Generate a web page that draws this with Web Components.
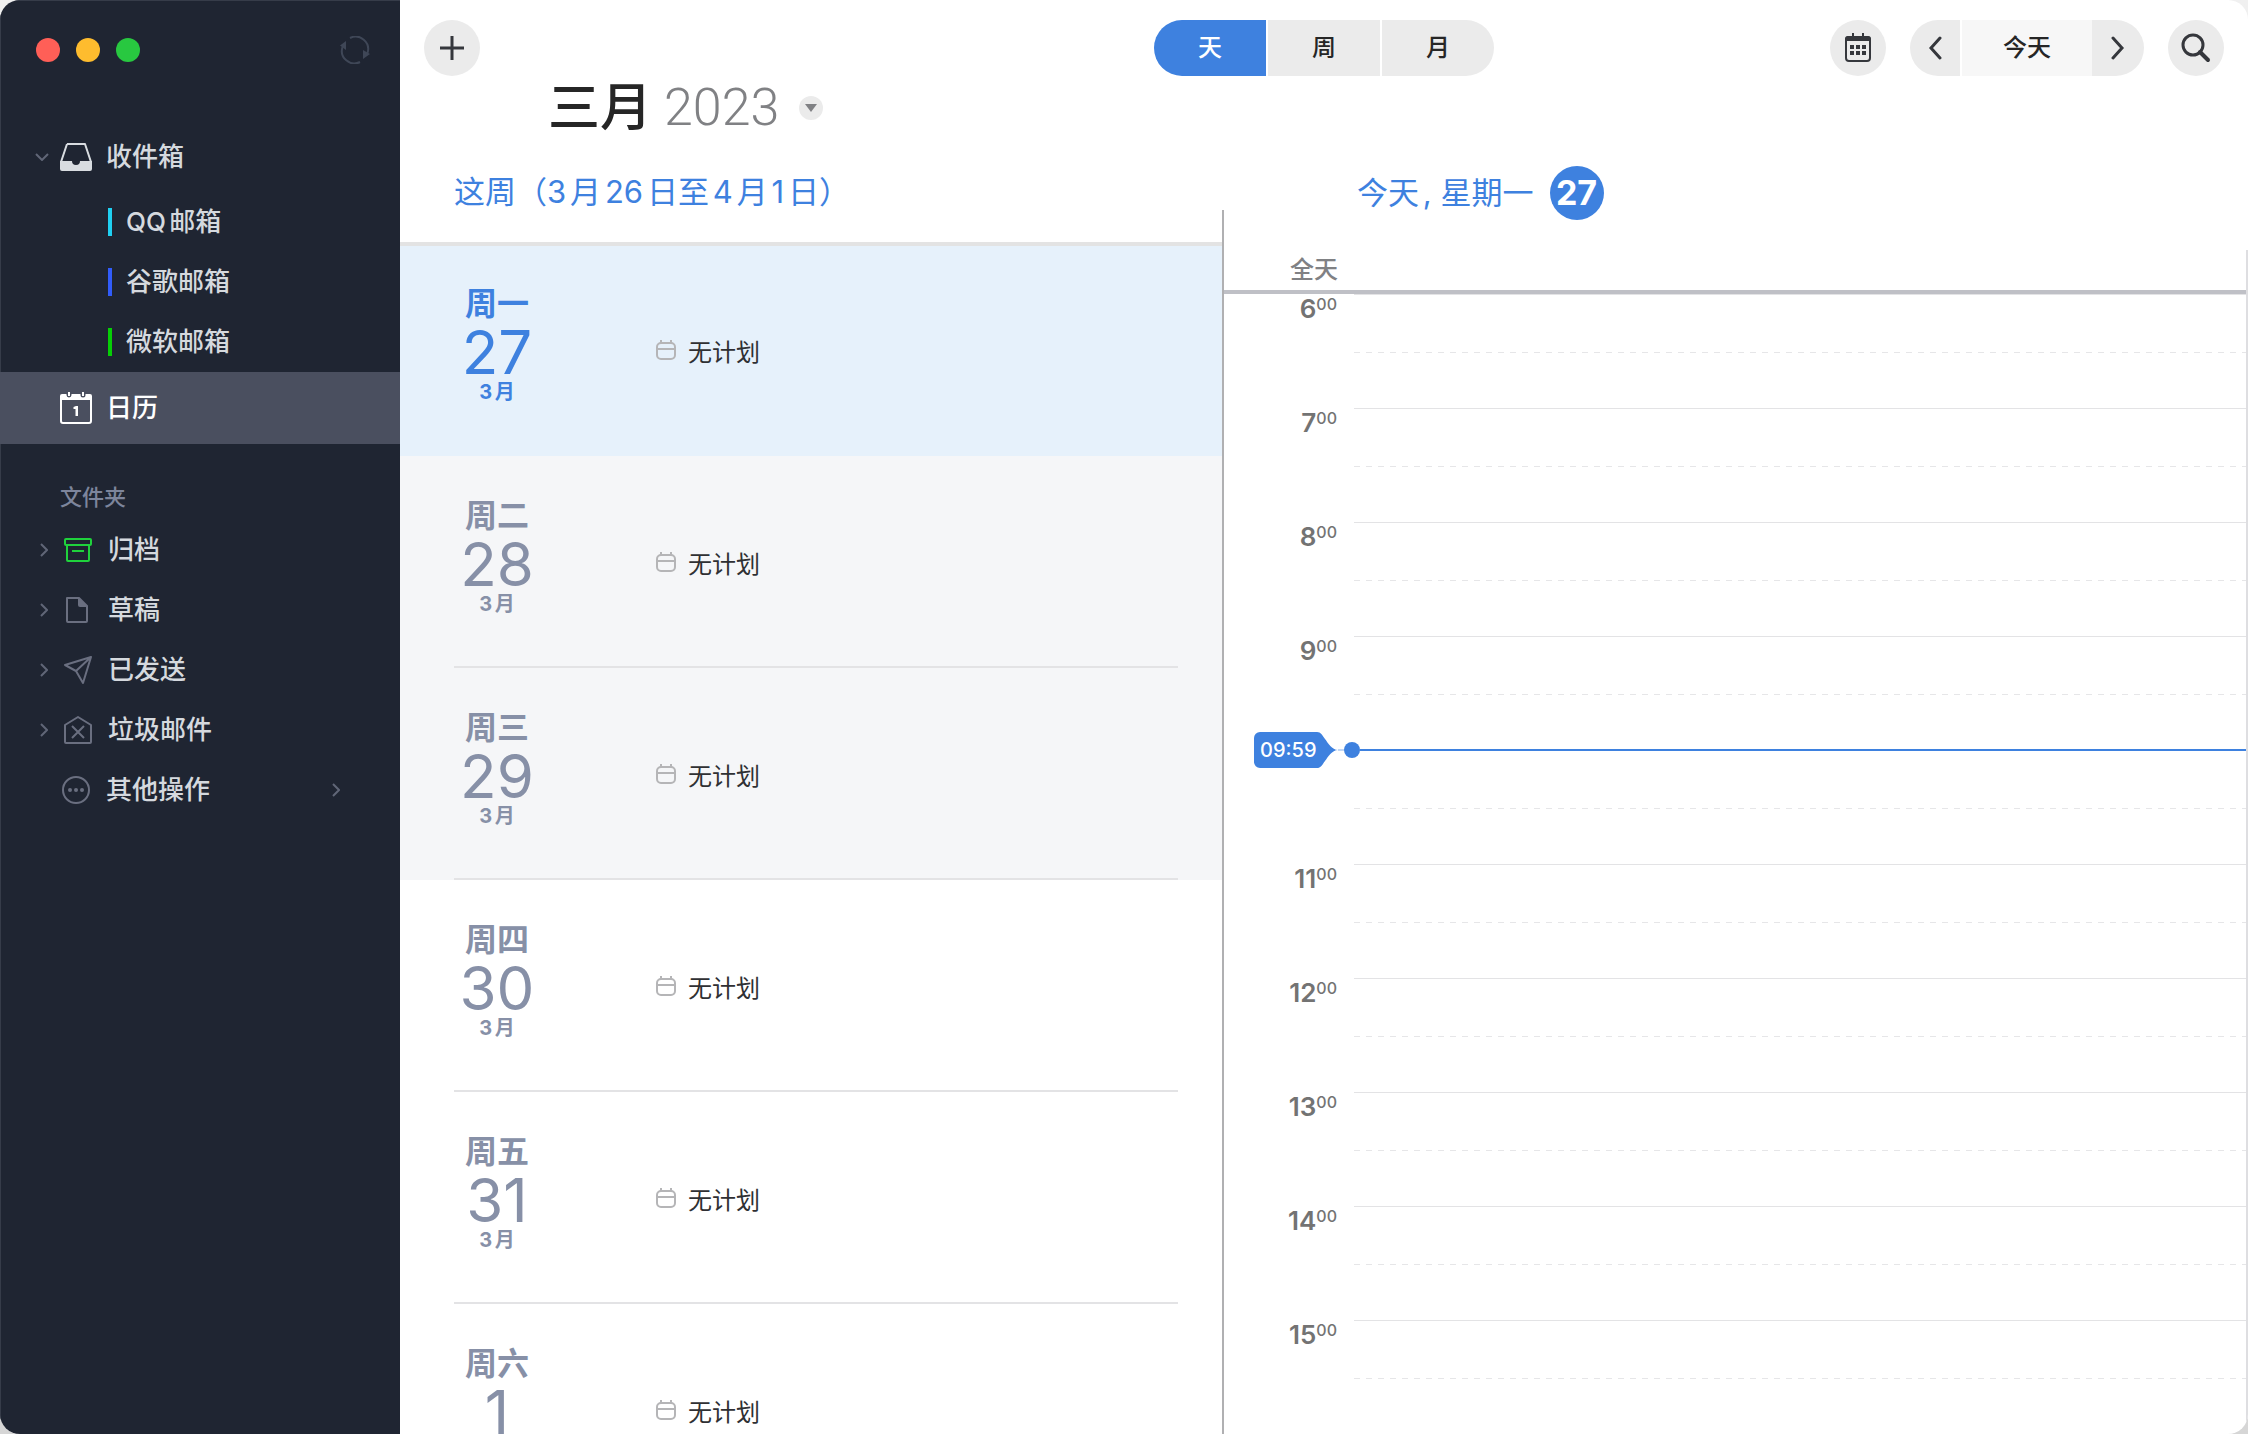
<!DOCTYPE html>
<html lang="zh-CN">
<head>
<meta charset="utf-8">
<title>日历</title>
<style>
  html, body { margin: 0; height: 100%; }
  body {
    background: linear-gradient(#f0f0f0, #d6d6d6);
    font-family: Inter, "Noto Sans CJK SC", sans-serif;
    text-autospace: normal;
    overflow: hidden;
    --blue: #3e81df;
    --chip: #ebebeb;
    --ink: #35373c;
  }
</style>
</head>
<body>
<calendar-app></calendar-app>
<script>
const ICONS = {
  refresh: ['0 0 30 28', '<g fill="none" stroke="#3f4757" stroke-width="2"><path d="M10 2A12.500 12.500 0 0 1 27.500 17M20 26A12.500 12.500 0 0 1 2.500 11"/></g><path fill="#3f4757" d="M0 9.500 6 5v9zM30 18l-7-4v9z"/>'],
  down: ['0 0 14 8', '<path d="M1 1l6 6 6-6" fill="none" stroke="#606677" stroke-width="2"/>'],
  right: ['0 0 8 14', '<path d="M1 1l6 6-6 6" fill="none" stroke="#606677" stroke-width="2"/>'],
  inbox: ['0 0 32 28', '<path d="M7 1h18l6 18M1 19 7 1" fill="none" stroke="#d8dce0" stroke-width="2" stroke-linejoin="round"/><path fill="#d8dce0" d="M0 18h12a4 4 0 0 0 8 0h12v8a2 2 0 0 1-2 2H2a2 2 0 0 1-2-2z"/>'],
  cal1: ['0 0 32 32', '<path d="M1 6v23a2 2 0 0 0 2 2h26a2 2 0 0 0 2-2V6" fill="none" stroke="#fff" stroke-width="2"/><path fill="#fff" d="M0 8V4a2 2 0 0 1 2-2h4.500v1a2.500 2.500 0 0 0 5 0V2h9v1a2.500 2.500 0 0 0 5 0V2H30a2 2 0 0 1 2 2v4zM8 0h2v4H8zM22 0h2v4h-2zM18 14v10h-2.500v-7h-2v-2l2.500-1z"/>'],
  archive: ['0 0 28 24', '<g fill="none" stroke="#1fd23c" stroke-width="2" stroke-linejoin="round"><rect x="1" y="1" width="26" height="6" rx="1"/><path d="M3 7v15a1 1 0 0 0 1 1h20a1 1 0 0 0 1-1V7M8 13h12"/></g>'],
  draft: ['0 0 28 26', '<path d="M3 1h12l8 8v15a1 1 0 0 1-1 1H4a1 1 0 0 1-1-1z" fill="none" stroke="#6a6f80" stroke-width="2" stroke-linejoin="round"/><path fill="#6a6f80" d="M14 0l10 10H16a2 2 0 0 1-2-2z"/>'],
  sent: ['0 0 28 28', '<path d="M27 1 1 9l11 6 7 12zM27 1 12 15" fill="none" stroke="#6a6f80" stroke-width="2" stroke-linejoin="round"/>'],
  spam: ['0 0 28 28', '<path d="M1 9 14 1l13 8v17a1 1 0 0 1-1 1H2a1 1 0 0 1-1-1zM8 10l12 12M20 10 8 22" fill="none" stroke="#6a6f80" stroke-width="2" stroke-linejoin="round"/>'],
  more: ['0 0 28 28', '<circle cx="14" cy="14" r="13" fill="none" stroke="#6a6f80" stroke-width="2"/><g fill="#6a6f80"><circle cx="8" cy="14" r="2"/><circle cx="14" cy="14" r="2"/><circle cx="20" cy="14" r="2"/></g>'],
  plus: ['0 0 24 24', '<path d="M12 0v24M0 12h24" stroke="#35373c" stroke-width="3"/>'],
  month: ['0 0 26 30', '<rect x="1" y="4" width="24" height="24" rx="3" fill="none" stroke="#35373c" stroke-width="2"/><path fill="#35373c" d="M0 8V6a3 3 0 0 1 3-3h20a3 3 0 0 1 3 3v2zM7 0h2v4H7zM17 0h2v4h-2zM5 12h4v4H5zM11 12h4v4h-4zM17 12h4v4h-4zM5 18h4v4H5zM11 18h4v4h-4zM17 18h4v4h-4z"/>'],
  prev: ['0 0 14 24', '<path d="M12 2 3 12l9 10" fill="none" stroke="#35373c" stroke-width="3" stroke-linecap="round"/>'],
  next: ['0 0 14 24', '<path d="M2 2l9 10-9 10" fill="none" stroke="#35373c" stroke-width="3" stroke-linecap="round"/>'],
  search: ['0 0 30 30', '<circle cx="12" cy="12" r="10" fill="none" stroke="#35373c" stroke-width="3"/><path d="M19 19l8 8" stroke="#35373c" stroke-width="4" stroke-linecap="round"/>'],
  caret: ['0 0 12 8', '<path d="M0 0h12L6 8z" fill="#808184"/>'],
  event: ['0 0 20 20', '<g fill="none" stroke="#b5b5b7" stroke-width="2"><rect x="1" y="3" width="18" height="16" rx="4"/><path d="M1 9h18M5 0v3M15 0v3"/></g>'],
  flag: ['0 0 84 36', '<path fill="#3e81df" d="M6 0h57c4 0 5 3 8 7s7 11 13 11c-6 0-10 7-13 11s-4 7-8 7H6a6 6 0 0 1-6-6V6a6 6 0 0 1 6-6z"/>']
};
function define(name, html, setup) {
  const tpl = document.createElement('template');
  tpl.innerHTML = html;
  customElements.define(name, class extends HTMLElement {
    constructor() {
      super();
      this.attachShadow({ mode: 'open' }).append(tpl.content.cloneNode(true));
    }
    connectedCallback() { if (setup) setup(this, this.shadowRoot); }
  });
}
const reset = 'button,a{all:unset;box-sizing:border-box;cursor:pointer}';

define('ui-icon', '<style>:host{display:block;flex:none}svg{display:block}</style><svg aria-hidden="true"></svg>', (el, root) => {
  const [box, body] = ICONS[el.getAttribute('name')];
  const [, , w, h] = box.split(' ');
  const svg = root.querySelector('svg');
  svg.setAttribute('viewBox', box);
  svg.setAttribute('width', w);
  svg.setAttribute('height', h);
  svg.innerHTML = body;
});

define('window-lights', `<style>
  :host{display:flex;gap:16px}
  button{all:unset;width:24px;height:24px;border-radius:50%;background:var(--c)}
</style>
<button aria-label="关闭" style="--c:#ff5f57"></button><button aria-label="最小化" style="--c:#febc2e"></button><button aria-label="缩放" style="--c:#28c840"></button>`);

define('nav-item', `<style>${reset}
  :host{display:block;color:#d5d9de;font-size:26px;font-weight:500;line-height:40px}
  a{display:grid;grid-template-columns:60px 46px 1fr auto;align-items:center;height:60px;width:100%;padding-right:60px}
  .twist{display:flex;padding-left:40px}
  .twist.open{padding-left:35px}
  .icon{display:flex}
  .tall{height:70px}
  :host([folder]) a{grid-template-columns:64px 44px 1fr auto}
  :host([more]) a{grid-template-columns:62px 44px 1fr auto}
  :host([selected]) a{height:72px;background:#4a4f5f;color:#fff}
</style><a href="#"><span class="twist"></span><span class="icon"></span><slot></slot><span class="end"></span></a>`, (el, root) => {
  const icon = n => `<ui-icon name="${n}"></ui-icon>`;
  root.querySelector('.icon').innerHTML = icon(el.getAttribute('icon'));
  const t = root.querySelector('.twist');
  if (el.hasAttribute('folder')) t.innerHTML = icon('right');
  if (el.hasAttribute('open')) { t.innerHTML = icon('down'); t.classList.add('open'); root.querySelector('a').classList.add('tall'); }
  if (el.hasAttribute('more')) root.querySelector('.end').innerHTML = icon('right');
});

define('account-item', `<style>${reset}
  :host{display:block;color:#d5d9de;font-size:26px;font-weight:500;line-height:40px}
  a{display:flex;align-items:center;gap:14px;height:60px;padding-left:108px}
  i{width:4px;height:28px;background:var(--tag)}
</style><a href="#"><i></i><slot></slot></a>`);

define('side-bar', `<style>${reset}
  :host{display:block;background:#1f2532;box-shadow:inset 1px 1px 0 #363c49}
  header{display:flex;align-items:center;justify-content:space-between;height:100px;padding:0 30px 0 36px;margin-bottom:22px}
  h2{margin:31px 0 1px;padding-left:60px;font-size:22px;font-weight:500;line-height:44px;color:#7d859c}
</style>
<header><window-lights></window-lights><button aria-label="刷新"><ui-icon name="refresh"></ui-icon></button></header>
<nav>
  <nav-item icon="inbox" open>收件箱</nav-item>
  <account-item style="--tag:#1fd0f2">QQ邮箱</account-item>
  <account-item style="--tag:#315cfa">谷歌邮箱</account-item>
  <account-item style="--tag:#06cf06">微软邮箱</account-item>
  <nav-item icon="cal1" selected>日历</nav-item>
  <h2>文件夹</h2>
  <nav-item icon="archive" folder>归档</nav-item>
  <nav-item icon="draft" folder>草稿</nav-item>
  <nav-item icon="sent" folder>已发送</nav-item>
  <nav-item icon="spam" folder>垃圾邮件</nav-item>
  <nav-item icon="more" more>其他操作</nav-item>
</nav>`);

define('tool-bar', `<style>${reset}
  :host{display:grid;grid-template-columns:1fr auto 1fr;padding:20px 24px 0;font-size:24px;font-weight:500;line-height:36px;color:#262626}
  button{display:flex;align-items:center;justify-content:center;height:56px;background:var(--chip)}
  .round{width:56px;border-radius:50%}
  .group{display:flex;border-radius:28px;overflow:hidden}
  .views{gap:2px}
  .views button{width:112px}
  .views button[aria-pressed=true]{background:var(--blue);color:#fff}
  .right{display:flex;justify-content:flex-end;gap:24px}
  .prev{width:50px;margin-right:2px}
  .today{width:130px;background:#f7f7f7}
  .next{width:52px}
</style>
<div><button class="round" aria-label="新建"><ui-icon name="plus"></ui-icon></button></div>
<div class="group views"><button aria-pressed="true">天</button><button>周</button><button>月</button></div>
<div class="right">
  <button class="round" aria-label="选择日期"><ui-icon name="month"></ui-icon></button>
  <div class="group"><button class="prev" aria-label="上一天"><ui-icon name="prev"></ui-icon></button><button class="today">今天</button><button class="next" aria-label="下一天"><ui-icon name="next"></ui-icon></button></div>
  <button class="round" aria-label="搜索"><ui-icon name="search"></ui-icon></button>
</div>`);

define('day-row', `<style>
  :host{display:block;background:var(--row,#fff);color:#8790a7}
  article{display:flex;height:212px;box-sizing:border-box;margin:0 44px 0 54px;border-bottom:2px solid #e3e3e5}
  :host([today]){--row:#e6f1fb;color:var(--blue)}
  :host([today]) article{border-color:transparent}
  :host([muted]){--row:#f5f6f8}
  .date{display:flex;flex-direction:column;align-items:center;width:86px;padding-top:42px}
  .wd{font-size:32px;font-weight:700;line-height:36px}
  .num{font-size:60px;font-weight:400;line-height:60px}
  .mon{font-size:20px;font-weight:700;line-height:20px}
  .plan{display:flex;gap:12px;padding:90px 0 0 116px;height:40px;color:#2f3033;font-size:24px;line-height:38px}
  ui-icon{padding-top:6px}
</style>
<article><div class="date"><span class="wd"></span><span class="num"></span><span class="mon"></span></div>
<div class="plan"><ui-icon name="event"></ui-icon><slot></slot></div></article>`, (el, root) => {
  root.querySelector('.wd').textContent = el.getAttribute('weekday');
  root.querySelector('.num').textContent = el.getAttribute('day');
  root.querySelector('.mon').textContent = el.getAttribute('month');
});

define('week-agenda', `<style>${reset}
  :host{display:flex;flex-direction:column;min-height:0;overflow:hidden}
  .month{display:flex;align-items:center;gap:20px;padding-left:148px;line-height:64px;font-size:52px;color:#808184;font-weight:300}
  h1{display:flex;gap:12px;margin:0;font:inherit}
  strong{font-weight:500;color:#262626}
  h1 span{font-family:Roboto,sans-serif}
  .month button{display:flex;align-items:center;justify-content:center;width:24px;height:24px;border-radius:50%;background:var(--chip)}
  h2{position:relative;margin:0;padding:32px 0 30px 54px;border-bottom:4px solid #e3e3e3;font-size:31px;font-weight:400;line-height:40px;color:var(--blue)}
  .days{flex:1;min-height:0;margin-top:-2px;overflow:hidden}
</style>
<div class="month"><h1><strong>三月</strong><span>2023</span></h1><button aria-label="选择月份"><ui-icon name="caret"></ui-icon></button></div>
<h2>这周（3月26日至4月1日）</h2>
<div class="days">
  <day-row today weekday="周一" day="27" month="3月">无计划</day-row>
  <day-row muted weekday="周二" day="28" month="3月">无计划</day-row>
  <day-row muted weekday="周三" day="29" month="3月">无计划</day-row>
  <day-row weekday="周四" day="30" month="3月">无计划</day-row>
  <day-row weekday="周五" day="31" month="3月">无计划</day-row>
  <day-row weekday="周六" day="1" month="">无计划</day-row>
</div>`);

define('hour-row', `<style>
  :host{display:grid;grid-template-columns:130px 1fr;height:114px}
  .label{padding-right:17px;text-align:right;color:#737373;font-size:26px;font-weight:600;line-height:30px}
  sup{font-size:16px;font-weight:500;line-height:16px;vertical-align:8px}
  .slots{border-top:1px solid #e3e3e5}
  .half{height:1px;margin-top:57px;background:repeating-linear-gradient(90deg,#e6e6e8 0 6px,transparent 6px 12px)}
</style><div class="label"></div><div class="slots"><div class="half"></div></div>`, (el, root) => {
  const h = el.getAttribute('hour');
  if (h) root.querySelector('.label').innerHTML = h + '<sup>00</sup>';
});

define('now-marker', `<style>
  :host{position:absolute;left:30px;right:0;top:438px;display:flex;align-items:center;height:36px}
  .tag{display:grid;color:#fff;font-size:20px;font-weight:500;line-height:36px}
  .tag>*{grid-area:1/1}
  time{padding-left:6px}
  .lead{width:6px;height:2px;background:#c3d8f5}
  .dot{width:16px;height:16px;border-radius:50%;background:var(--blue)}
  .line{flex:1;height:2px;background:var(--blue)}
</style><div class="tag"><ui-icon name="flag"></ui-icon><time><slot></slot></time></div><span class="lead"></span><span class="dot"></span><span class="line"></span>`);

define('day-schedule', `<style>
  :host{display:flex;flex-direction:column;min-height:0;overflow:hidden}
  h2{display:flex;align-items:center;gap:16px;margin:0;padding:90px 0 30px 133px;font-size:31px;font-weight:400;line-height:54px;color:var(--blue)}
  .badge{width:54px;height:54px;border-radius:50%;background:var(--blue);color:#fff;text-align:center;font-size:34px;font-weight:700}
  .board{flex:1;min-height:0;display:flex;flex-direction:column;border-right:2px solid #dedee1}
  .allday{border-bottom:4px solid #bfc0c6;color:#808184;font-size:24px;font-weight:500;line-height:40px}
  .allday span{display:block;width:114px;text-align:right}
  .hours{position:relative;flex:1;min-height:0;overflow:hidden}
</style>
<h2><span>今天, 星期一</span><span class="badge">27</span></h2>
<div class="board">
  <div class="allday"><span>全天</span></div>
  <div class="hours">
    <hour-row hour="6"></hour-row><hour-row hour="7"></hour-row><hour-row hour="8"></hour-row><hour-row hour="9"></hour-row><hour-row></hour-row>
    <hour-row hour="11"></hour-row><hour-row hour="12"></hour-row><hour-row hour="13"></hour-row><hour-row hour="14"></hour-row><hour-row hour="15"></hour-row>
    <now-marker>09:59</now-marker>
  </div>
</div>`);

define('calendar-app', `<style>
  :host{display:grid;grid-template-columns:400px 1fr;height:100vh;border-radius:20px;overflow:hidden;background:#fff}
  main{display:flex;flex-direction:column;min-width:0;min-height:0}
  .panes{flex:1;min-height:0;display:grid;grid-template-columns:822fr 2px 1024fr;grid-template-rows:minmax(0,1fr)}
  .rule{margin-top:134px;background:#b0b0b2}
</style>
<side-bar></side-bar>
<main><tool-bar></tool-bar><div class="panes"><week-agenda></week-agenda><div class="rule"></div><day-schedule></day-schedule></div></main>`);
</script>
</body>
</html>
